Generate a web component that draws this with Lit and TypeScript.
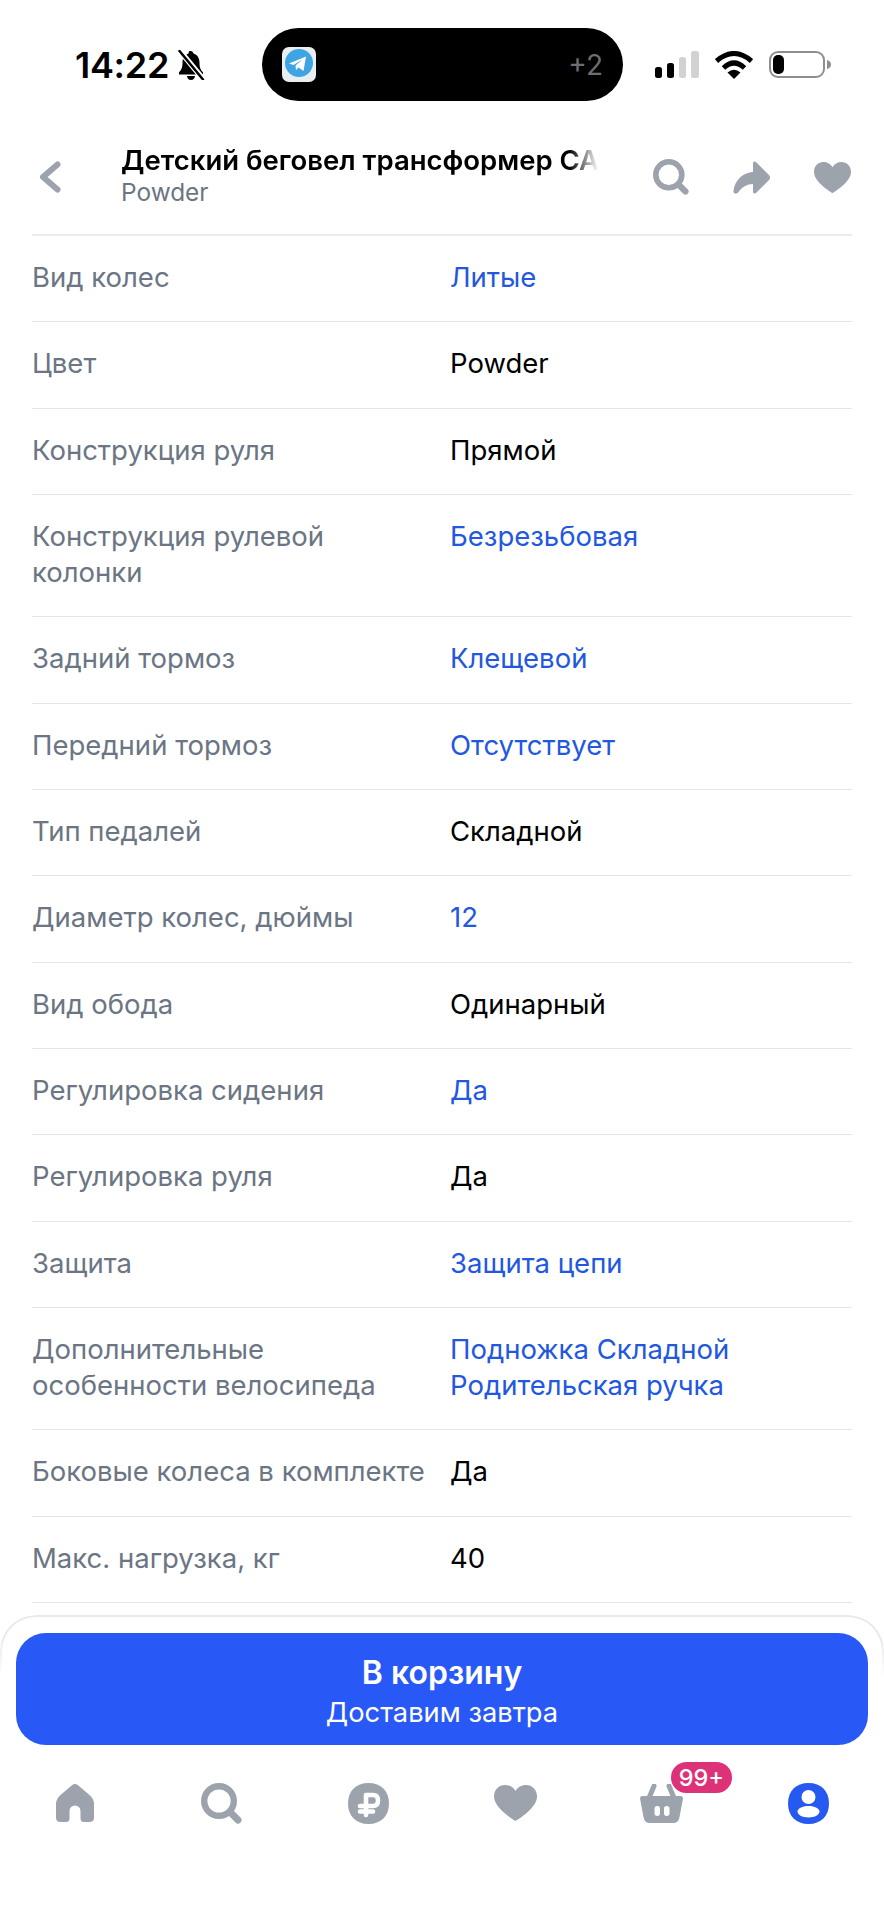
import { LitElement, html, css, svg } from 'lit';
import { customElement } from 'lit/decorators.js';

type Row = { label: string; value: string[]; link?: boolean };

const rows: Row[] = [
  { label: 'Вид колес', value: ['Литые'], link: true },
  { label: 'Цвет', value: ['Powder'] },
  { label: 'Конструкция руля', value: ['Прямой'] },
  { label: 'Конструкция рулевой колонки', value: ['Безрезьбовая'], link: true },
  { label: 'Задний тормоз', value: ['Клещевой'], link: true },
  { label: 'Передний тормоз', value: ['Отсутствует'], link: true },
  { label: 'Тип педалей', value: ['Складной'] },
  { label: 'Диаметр колес, дюймы', value: ['12'], link: true },
  { label: 'Вид обода', value: ['Одинарный'] },
  { label: 'Регулировка сидения', value: ['Да'], link: true },
  { label: 'Регулировка руля', value: ['Да'] },
  { label: 'Защита', value: ['Защита цепи'], link: true },
  { label: 'Дополнительные особенности велосипеда', value: ['Подножка Складной', 'Родительская ручка'], link: true },
  { label: 'Боковые колеса в комплекте', value: ['Да'] },
  { label: 'Макс. нагрузка, кг', value: ['40'] },
];

const searchIcon = (size: number) => html`<svg width=${size} height=${size} viewBox="0 0 41 41">
  <circle cx="18" cy="18" r="14.8" fill="none" stroke="currentColor" stroke-width="6.4"></circle>
  <line x1="29" y1="29" x2="37" y2="37" stroke="currentColor" stroke-width="7" stroke-linecap="round"></line>
</svg>`;

const heartIcon = (w: number, h: number) => html`<svg width=${w} height=${h} viewBox="0 0 43 36">
  <path fill="currentColor" d="M21.5 36C19 34.500 0 23 0 11.500 0 4.500 5 0 11 0c4.500 0 8.500 2.300 10.500 6C23.500 2.300 27.500 0 32 0c6 0 11 4.500 11 11.500C43 23 24 34.500 21.500 36Z"></path>
</svg>`;

const navIcons = [
  html`<svg width="38" height="38" viewBox="0 0 38 38">
    <path fill="currentColor" d="M16 1.300a4.600 4.600 0 0 1 6 0L33.500 11Q38 15 38 20V33.500Q38 38 33.500 38H28Q24.500 38 24.500 34.500V27a5.500 5.500 0 0 0-11 0V34.500Q13.500 38 10 38H4.500Q0 38 0 33.500V20Q0 15 4.500 11Z"></path>
  </svg>`,
  searchIcon(41),
  html`<svg width="41" height="41" viewBox="0 0 41 41">
    <path fill="currentColor" d="M20.500 0C33 0 41 8 41 20.500S33 41 20.500 41 0 33 0 20.500 8 0 20.500 0Z"></path>
    <path fill="none" stroke="#fff" stroke-width="4.600" stroke-linecap="round" stroke-linejoin="round" d="M18 32V12H25Q30 12 30 17.500T25 23H12M12 28.500H25"></path>
  </svg>`,
  heartIcon(43, 36),
  html`<svg width="43" height="39" viewBox="0 0 43 39">
    <path fill="none" stroke="currentColor" stroke-width="5" stroke-linecap="round" d="M14 2 9 14M29 2l5 12"></path>
    <path fill="currentColor" d="M2 12H41Q43 12 43 14.500L39.500 33Q38.500 39 33 39H10Q4.500 39 3.500 33L0 14.500Q0 12 2 12Z"></path>
    <rect x="14.500" y="22" width="5.500" height="10" rx="2.700" fill="#fff"></rect>
    <rect x="24" y="22" width="5.500" height="10" rx="2.700" fill="#fff"></rect>
  </svg>`,
  html`<svg width="41" height="41" viewBox="0 0 41 41">
    <path fill="currentColor" d="M20.500 0C33 0 41 8 41 20.500S33 41 20.500 41 0 33 0 20.500 8 0 20.500 0Z"></path>
    <circle cx="20.500" cy="14" r="7" fill="#fff"></circle>
    <path fill="#fff" d="M20.500 23C27 23 31.500 25.500 31.500 28.500 31.500 31.500 27 34.500 20.500 34.500S9.500 31.500 9.500 28.500C9.500 25.500 14 23 20.500 23Z"></path>
  </svg>`,
];

@customElement('app-root')
export class AppRoot extends LitElement {
  static styles = css`
    :host {
      display: flex;
      flex-direction: column;
      height: 1920px;
      background: #fff;
      font-family: Inter, 'Noto Sans', sans-serif;
      color: #000;
      overflow: hidden;
    }

    /* status bar */
    .status {
      display: flex;
      align-items: center;
      height: 73px;
      padding: 28px 0 19px;
      flex: none;
    }
    .status-left {
      display: flex;
      align-items: center;
      gap: 8px;
      width: 187px;
      padding-left: 75px;
    }
    .time {
      font-size: 36px;
      font-weight: 600;
      letter-spacing: -0.3px;
      line-height: 1;
    }
    .island {
      display: flex;
      align-items: center;
      justify-content: space-between;
      box-sizing: border-box;
      width: 361px;
      height: 73px;
      padding: 0 20px;
      border-radius: 37px;
      background: #000;
    }
    .island-more {
      font-size: 28px;
      color: #6e6e70;
    }
    .status-right {
      display: flex;
      align-items: center;
      gap: 16px;
      margin-left: 32px;
    }

    /* header */
    .header {
      display: flex;
      align-items: center;
      height: 114px;
      padding-left: 39px;
      flex: none;
      color: #9ca3ad;
    }
    .back {
      margin-right: 60px;
    }
    .titles {
      width: 482px;
      margin-top: -3px;
    }
    .title {
      font-size: 27.5px;
      font-weight: 600;
      line-height: 34px;
      color: #000;
      white-space: nowrap;
      -webkit-mask-image: linear-gradient(90deg, #000 93%, transparent 99%);
      mask-image: linear-gradient(90deg, #000 93%, transparent 99%);
    }
    .subtitle {
      font-size: 24.4px;
      line-height: 31px;
      color: #6b7583;
    }
    .actions {
      display: flex;
      align-items: center;
      margin-left: 50px;
      gap: 44px;
    }

    /* characteristics */
    .list {
      margin: 0 32px;
      border-top: 2px solid #e9ebee;
      flex: none;
    }
    .row {
      display: grid;
      grid-template-columns: 418px 1fr;
      padding: 23px 0 26px;
      border-bottom: 1px solid #e3e5e9;
      font-size: 27.5px;
      line-height: 36.3px;
    }
    .label {
      color: #6b7583;
      padding-right: 20px;
    }
    .value.link {
      color: #2257e0;
    }
    .value div {
      white-space: nowrap;
    }

    /* bottom panel */
    .panel {
      position: relative;
      margin-top: 12px;
      padding: 18px 16px 0;
      flex: none;
    }
    .panel::before {
      content: '';
      position: absolute;
      inset: 0 0 auto;
      height: 62px;
      box-sizing: border-box;
      border: 2px solid #e8e9ec;
      border-bottom: 0;
      border-radius: 36px 36px 0 0;
      -webkit-mask-image: linear-gradient(#000 40%, transparent);
      mask-image: linear-gradient(#000 40%, transparent);
    }
    .buy {
      position: relative;
      display: flex;
      flex-direction: column;
      align-items: center;
      justify-content: center;
      box-sizing: border-box;
      height: 112px;
      padding-top: 4px;
      border-radius: 30px;
      background: #2859f6;
      color: #fff;
    }
    .buy-title {
      font-size: 32px;
      font-weight: 600;
      line-height: 40px;
    }
    .buy-sub {
      font-size: 27.3px;
      line-height: 34px;
      margin-top: 3px;
    }
    .nav {
      display: grid;
      grid-template-columns: repeat(6, 1fr);
      height: 44px;
      margin: 36px -14px 0;
      color: #9ca3ad;
    }
    .nav-item {
      position: relative;
      display: flex;
      align-items: center;
      justify-content: center;
    }
    .nav-item.active {
      color: #2659f0;
    }
    .badge {
      position: absolute;
      top: -19px;
      left: 82px;
      padding: 0 8px;
      height: 31px;
      border-radius: 15.5px;
      background: #dd3278;
      color: #fff;
      font-size: 23.5px;
      font-weight: 500;
      line-height: 31px;
    }
  `;

  render() {
    return html`
      <div class="status">
        <div class="status-left">
          <span class="time">14:22</span>
          <svg width="28" height="30" viewBox="0 0 28 30">
            <path d="M14 1Q16 1 16.500 3.500C21 5 22.500 8.500 22.500 13 22.500 18 24 20 26 22.500V24.500H2V22.500C4 20 5.500 18 5.500 13 5.500 8.500 7 5 11.500 3.500 12 1 12 1 14 1ZM10 26H18Q17.500 30 14 30T10 26Z"></path>
            <path d="M3 1 26 29" stroke="#fff" stroke-width="5.500"></path>
            <path d="M2.500 1 26 29.500" stroke="#000" stroke-width="2.500" stroke-linecap="round"></path>
          </svg>
        </div>
        <div class="island">
          <svg width="34" height="35" viewBox="0 0 34 35">
            <rect width="34" height="35" rx="7" fill="#e9eef3"></rect>
            <circle cx="17" cy="16" r="14" fill="#3fa5e2"></circle>
            <path fill="#fff" d="M7 16.500 24 9.500 21.500 24 16.500 20.500 14 23 13.500 18.500 20.500 12.500 11.500 18Z"></path>
          </svg>
          <span class="island-more">+2</span>
        </div>
        <div class="status-right">
          <svg width="44" height="27" viewBox="0 0 44 27">
            ${[[0, 16, 7, 11, '#000'], [12, 12, 7, 15, '#000'], [24, 6, 7, 21, '#d2d2d2'], [36, 0, 8, 27, '#d2d2d2']].map(
              ([x, y, w, h, fill]) => svg`<rect x=${x} y=${y} width=${w} height=${h} rx="2.500" fill=${fill}></rect>`
            )}
          </svg>
          <svg width="38" height="28" viewBox="0 0 38 28">
            <path fill="none" stroke="#000" stroke-width="5" d="M1.500 10Q19-5 36.500 10M8.500 17Q19 7 29.500 17"></path>
            <path d="M12.500 21.500Q19 16 25.500 21.500L19 28Z"></path>
          </svg>
          <svg width="62" height="27" viewBox="0 0 62 27">
            <rect x="1" y="1" width="54" height="25" rx="8" fill="none" stroke="#8e8e8e" stroke-width="2"></rect>
            <rect x="4" y="4" width="11" height="19" rx="5" fill="#000"></rect>
            <path d="M58 9Q62 10 62 13.500T58 18Z" fill="#8e8e8e"></path>
          </svg>
        </div>
      </div>

      <div class="header">
        <svg class="back" width="22" height="32" viewBox="0 0 22 32">
          <path d="M18.500 3.500 4 16 18.500 28.500" fill="none" stroke="currentColor" stroke-width="6" stroke-linecap="round" stroke-linejoin="round"></path>
        </svg>
        <div class="titles">
          <div class="title">Детский беговел трансформер СА</div>
          <div class="subtitle">Powder</div>
        </div>
        <div class="actions">
          ${searchIcon(36)}
          <svg width="37" height="33" viewBox="0 0 37 33">
            <path fill="currentColor" d="M20 1.500Q21.500-.5 23.500 1.500L36 14Q38 16.500 36 19L23.500 31.500Q21.500 33.500 20 31.500V23C14 23 9 26 5.500 31 3.500 33.500 0 33 .5 29.500 2 19 10 11.500 20 11Z"></path>
          </svg>
          ${heartIcon(37, 31)}
        </div>
      </div>

      <div class="list">
        ${rows.map(
          (row) => html`<div class="row">
            <div class="label">${row.label}</div>
            <div class="value ${row.link ? 'link' : ''}">${row.value.map((line) => html`<div>${line}</div>`)}</div>
          </div>`
        )}
      </div>

      <div class="panel">
        <div class="buy">
          <div class="buy-title">В корзину</div>
          <div class="buy-sub">Доставим завтра</div>
        </div>
        <div class="nav">
          ${navIcons.map(
            (icon, i) => html`<div class="nav-item ${i === 5 ? 'active' : ''}">
              ${icon}${i === 4 ? html`<span class="badge">99+</span>` : ''}
            </div>`
          )}
        </div>
      </div>
    `;
  }
}
